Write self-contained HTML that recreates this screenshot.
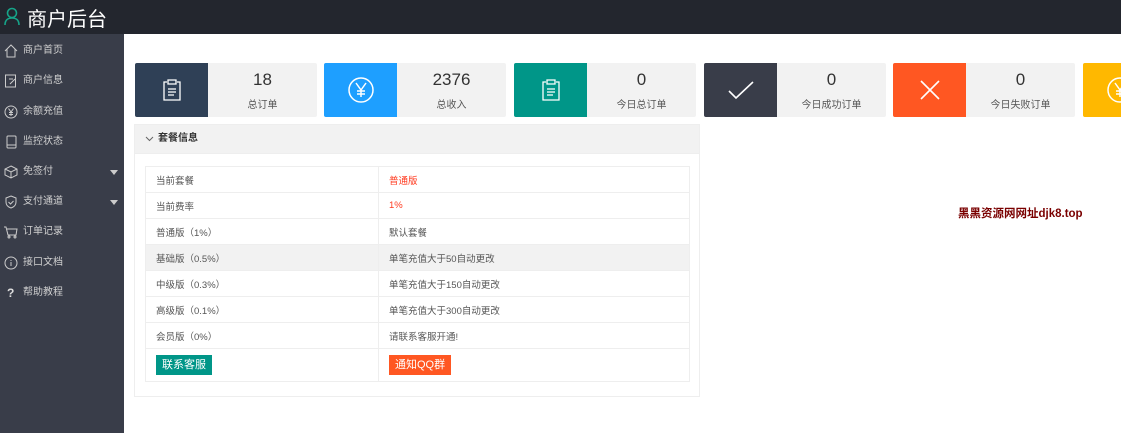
<!DOCTYPE html>
<html><head><meta charset="utf-8"><style>
*{margin:0;padding:0;box-sizing:border-box}
body{width:1121px;height:433px;overflow:hidden;background:#fff;font-family:"Liberation Sans","Noto Sans CJK SC",sans-serif;position:relative}
.hd{position:absolute;left:0;top:0;width:1121px;height:34px;background:#23262e}
.hd .t{position:absolute;left:27px;top:3px;font-size:20px;color:#fff}
.sb{position:absolute;left:0;top:34px;width:124px;height:399px;background:#393d49}
.it{position:absolute;left:0;height:30px;width:124px;color:#d0d0d0;font-size:10px;line-height:30px;padding-left:23px}
.it svg{position:absolute;left:4px;top:8px}
.arr{position:absolute;right:6px;top:13px;border:4px solid transparent;border-top:5px solid #ccc}
.card{position:absolute;top:63px;width:182px;height:54px;background:#f2f2f2;border-radius:2px;overflow:hidden}
.card .ic{position:absolute;left:0;top:0;width:73px;height:54px}
.card .n{position:absolute;left:73px;right:0;top:7px;text-align:center;font-size:17px;color:#333}
.card .l{position:absolute;left:73px;right:0;top:33px;text-align:center;font-size:10px;color:#555}
.ic svg{position:absolute;left:24px;top:14px}
.pn{position:absolute;left:134px;top:124px;width:566px;height:273px;border:1px solid #eee}
.ph{height:29px;background:#f2f2f2;border-bottom:1px solid #eee;font-size:10px;color:#333;line-height:28px;padding-left:23px;font-weight:bold;position:relative}
table{position:absolute;left:10px;top:41px;width:545px;border-collapse:collapse;font-size:9.5px;color:#555}
td{border:1px solid #eee;height:26px;padding-left:10px}
td:first-child{width:233px}
.red{color:#ff3a1f}
.btn{display:inline-block;color:#fff;font-size:11px;height:20px;line-height:20px;padding:0 6px}
.wm{position:absolute;left:958px;top:205px;font-size:11.5px;font-weight:bold;color:#7a0000}
</style></head><body>
<div class="hd"><svg style="position:absolute;left:4px;top:7px" width="16" height="18" viewBox="0 0 16 18"><circle cx="8" cy="6" r="4.5" fill="none" stroke="#16a589" stroke-width="1.6"/><path d="M1 18c0-5 3-7 7-7s7 2 7 7" fill="none" stroke="#16a589" stroke-width="1.6"/></svg><div class="t">商户后台</div></div>
<div class="sb">
<div class="it" style="top:2px"><svg width="14" height="14" viewBox="0 0 14 14" fill="none" stroke="#ccc"><path d="M1 7L7 1l6 6M3 5v8h8V5"/></svg>商户首页</div>
<div class="it" style="top:32px"><svg width="14" height="14" viewBox="0 0 14 14" fill="none" stroke="#ccc"><rect x="1.5" y="1" width="10" height="12"/><path d="M5 5h4M6 10l5-5"/></svg>商户信息</div>
<div class="it" style="top:63px"><svg width="14" height="14" viewBox="0 0 14 14" fill="none" stroke="#ccc"><circle cx="7" cy="7" r="6"/><path d="M4.5 3.5L7 7l2.5-3.5M7 7v4M5 7.5h4M5 9.5h4"/></svg>余额充值</div>
<div class="it" style="top:93px"><svg width="14" height="14" viewBox="0 0 14 14" fill="none" stroke="#ccc"><rect x="3" y="1" width="9" height="12" rx="1"/><path d="M3 10h9"/></svg>监控状态</div>
<div class="it" style="top:123px"><svg width="14" height="14" viewBox="0 0 14 14" fill="none" stroke="#ccc"><path d="M7 1l6 3v6l-6 3-6-3V4zM1 4l6 3 6-3M7 7v6"/></svg>免签付<span class="arr"></span></div>
<div class="it" style="top:153px"><svg width="14" height="14" viewBox="0 0 14 14" fill="none" stroke="#ccc"><path d="M7 1l5 2v4c0 3-2 5-5 6-3-1-5-3-5-6V3z"/><path d="M4.5 7l2 2 3-3"/></svg>支付通道<span class="arr"></span></div>
<div class="it" style="top:183px"><svg width="14" height="14" viewBox="0 0 14 14" fill="none" stroke="#ccc"><path d="M0 2h2l2 8h8l1-6H3"/><circle cx="5" cy="12" r="1"/><circle cx="11" cy="12" r="1"/></svg>订单记录</div>
<div class="it" style="top:214px"><svg width="14" height="14" viewBox="0 0 14 14" fill="none" stroke="#ccc"><circle cx="7" cy="7" r="6"/><path d="M7 6v4M7 4v1"/></svg>接口文档</div>
<div class="it" style="top:244px"><span style="position:absolute;left:7px;font-weight:bold;font-size:12px;color:#ddd">?</span>帮助教程</div>
</div>
<div class="card" style="left:135px"><div class="ic" style="background:#2f4056"><svg width="26" height="26" viewBox="0 0 26 26" fill="none" stroke="#fff" stroke-width="1.3"><path d="M8 5H5v18h16V5h-3M9 3h8v4H9zM9 12h8M9 15h8M9 18h6"/></svg></div><div class="n">18</div><div class="l">总订单</div></div>
<div class="card" style="left:324px"><div class="ic" style="background:#1e9fff"><svg width="26" height="26" viewBox="0 0 26 26" fill="none" stroke="#fff" stroke-width="1.5"><circle cx="13" cy="13" r="12"/><path d="M8 6l5 7 5-7M13 13v7M9 14h8M9 17h8"/></svg></div><div class="n">2376</div><div class="l">总收入</div></div>
<div class="card" style="left:514px"><div class="ic" style="background:#009688"><svg width="26" height="26" viewBox="0 0 26 26" fill="none" stroke="#fff" stroke-width="1.3"><path d="M8 5H5v18h16V5h-3M9 3h8v4H9zM9 12h8M9 15h8M9 18h6"/></svg></div><div class="n">0</div><div class="l">今日总订单</div></div>
<div class="card" style="left:704px"><div class="ic" style="background:#393d49"><svg width="26" height="26" viewBox="0 0 26 26" fill="none" stroke="#fff" stroke-width="1.6"><path d="M1 14l7 7L25 5"/></svg></div><div class="n">0</div><div class="l">今日成功订单</div></div>
<div class="card" style="left:893px"><div class="ic" style="background:#ff5722"><svg width="26" height="26" viewBox="0 0 26 26" fill="none" stroke="#fff" stroke-width="1.6"><path d="M4 4l18 18M22 4L4 22"/></svg></div><div class="n">0</div><div class="l">今日失败订单</div></div>
<div class="card" style="left:1083px"><div class="ic" style="background:#ffb800"><svg width="26" height="26" viewBox="0 0 26 26" fill="none" stroke="#fff" stroke-width="1.5"><circle cx="13" cy="13" r="12"/><path d="M8 6l5 7 5-7M13 13v7M9 14h8M9 17h8"/></svg></div></div>
<div class="pn"><div class="ph"><svg style="position:absolute;left:10px;top:11px" width="9" height="6" viewBox="0 0 9 6" fill="none" stroke="#666"><path d="M1 1l3.5 3.5L8 1"/></svg>套餐信息</div>
<table>
<tr><td>当前套餐</td><td class="red">普通版</td></tr>
<tr><td>当前费率</td><td class="red">1%</td></tr>
<tr><td>普通版（1%）</td><td>默认套餐</td></tr>
<tr style="background:#f2f2f2"><td>基础版（0.5%）</td><td>单笔充值大于50自动更改</td></tr>
<tr><td>中级版（0.3%）</td><td>单笔充值大于150自动更改</td></tr>
<tr><td>高级版（0.1%）</td><td>单笔充值大于300自动更改</td></tr>
<tr><td>会员版（0%）</td><td>请联系客服开通!</td></tr>
<tr><td style="height:33px"><span class="btn" style="background:#009688">联系客服</span></td><td><span class="btn" style="background:#ff5722">通知QQ群</span></td></tr>
</table></div>
<div class="wm">黑黑资源网网址djk8.top</div>
</body></html>
